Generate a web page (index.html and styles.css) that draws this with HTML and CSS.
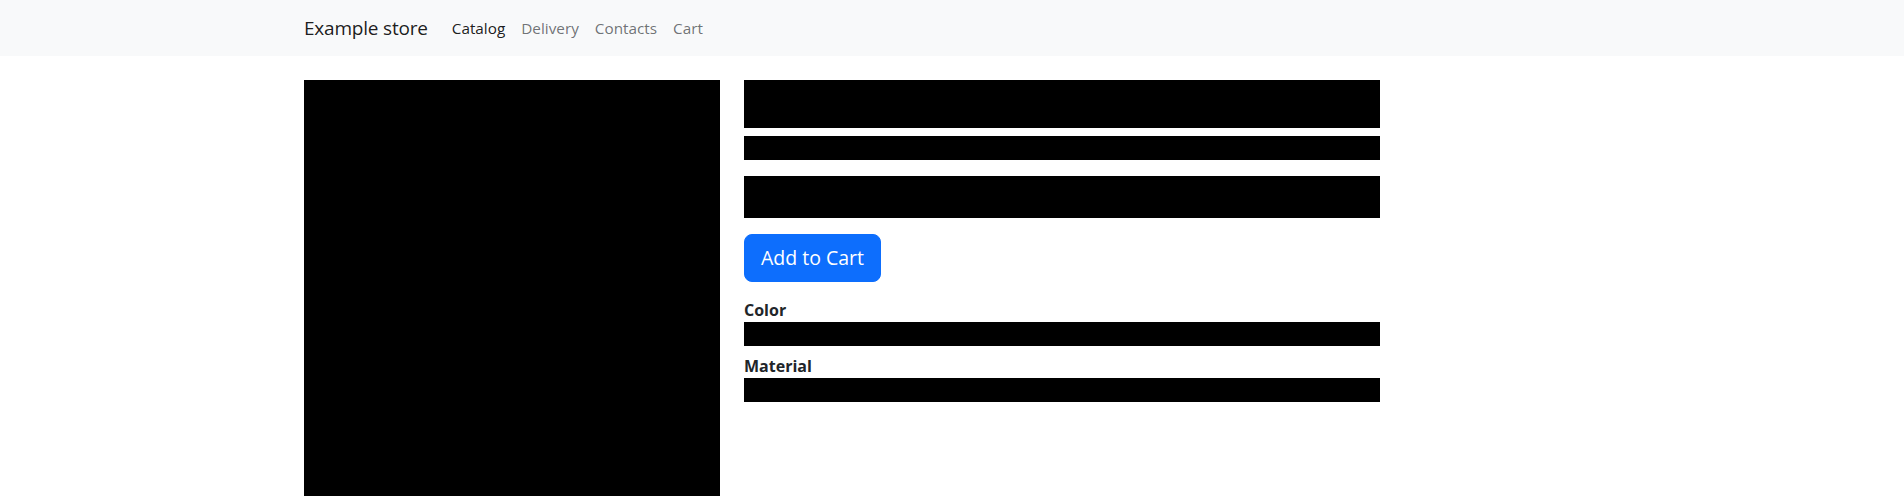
FILE: index.html
```html
<!DOCTYPE html>
<html lang="en">
<head>
<meta charset="utf-8">
<title>Example store</title>
<link rel="stylesheet" href="styles.css">
</head>
<body>
<nav class="navbar">
  <div class="container nav-inner">
    <a class="brand" href="#">Example store</a>
    <ul class="nav-links">
      <li><a class="nav-link active" href="#">Catalog</a></li>
      <li><a class="nav-link" href="#">Delivery</a></li>
      <li><a class="nav-link" href="#">Contacts</a></li>
      <li><a class="nav-link" href="#">Cart</a></li>
    </ul>
  </div>
</nav>
<main class="container product">
  <div class="product-image"></div>
  <div class="product-info">
    <div class="redact title"></div>
    <div class="redact subtitle"></div>
    <div class="redact price"></div>
    <button class="btn-cart" type="button">Add to Cart</button>
    <dl class="props">
      <dt>Color</dt>
      <dd class="redact line"></dd>
      <dt>Material</dt>
      <dd class="redact line"></dd>
    </dl>
  </div>
</main>
</body>
</html>
```
FILE: styles.css
```css
* {
  box-sizing: border-box;
}

html, body {
  margin: 0;
  overflow: hidden;
}

body {
  font-family: "Segoe UI", "Open Sans", "Noto Sans", sans-serif;
  font-size: 16px;
  line-height: 1.5;
  color: #212529;
  background: #fff;
}

.container {
  width: 100%;
  max-width: 1320px;
  margin: 0 auto;
  padding: 0 12px;
}

.navbar {
  background: #f8f9fa;
  padding: 8px 0;
}

.nav-inner {
  display: flex;
  align-items: center;
}

.brand {
  font-size: 19px;
  letter-spacing: -0.2px;
  line-height: 30px;
  padding: 5px 0;
  margin-right: 16px;
  color: rgba(0, 0, 0, 0.9);
  text-decoration: none;
}

.nav-links {
  display: flex;
  list-style: none;
  margin: 0;
  padding: 0;
}

.nav-link {
  display: block;
  padding: 8px;
  font-size: 15.3px;
  line-height: 24px;
  color: rgba(33, 37, 41, 0.65);
  text-decoration: none;
}

.nav-link.active {
  color: rgba(0, 0, 0, 0.9);
}

.product {
  display: flex;
  gap: 24px;
  margin-top: 24px;
}

.product-image {
  flex: 0 0 416px;
  height: 416px;
  background: #000;
}

.product-info {
  flex: 0 0 636px;
}

.redact {
  background: #000;
}

.title {
  height: 48px;
  margin-bottom: 8px;
}

.subtitle {
  height: 24px;
  margin-bottom: 16px;
}

.price {
  height: 42px;
  margin-bottom: 16px;
}

.btn-cart {
  display: block;
  margin: 0 0 16px;
  padding: 8px 16px;
  font-family: inherit;
  font-size: 19.5px;
  line-height: 30px;
  color: #fff;
  background: #0d6efd;
  border: 1px solid #0d6efd;
  border-radius: 8px;
  cursor: pointer;
}

.props {
  margin: 0;
}

.props dt {
  font-weight: 700;
  line-height: 24px;
}

.props dd {
  margin: 0 0 8px;
  height: 24px;
}
```
